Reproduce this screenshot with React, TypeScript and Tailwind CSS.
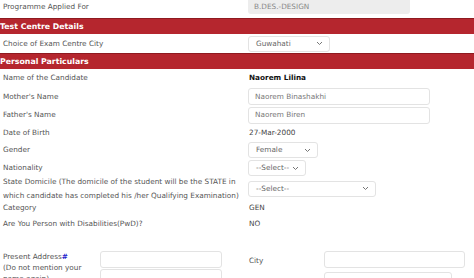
import React from "react";

const font = { fontFamily: '"DejaVu Sans", Verdana, sans-serif' };

function Chevron() {
  return (
    <svg width="7" height="5" viewBox="0 0 7 5" className="shrink-0">
      <path d="M1 1 L3.5 3.5 L6 1" stroke="#777" strokeWidth="1" fill="none" />
    </svg>
  );
}

function Select({ w, text }: { w: string; text: string }) {
  return (
    <div className={`${w} h-[16px] border border-[#e3e3e3] rounded-[3px] bg-white flex items-center justify-between pl-[7px] pr-[6px] text-[#666]`}>
      <span>{text}</span>
      <Chevron />
    </div>
  );
}

function Input({ w, text }: { w: string; text?: string }) {
  return (
    <div className={`${w} h-[17px] border border-[#e3e3e3] rounded-[3px] bg-white flex items-center pl-[6px] text-[#777]`}>
      {text}
    </div>
  );
}

function Bar({ title }: { title: string }) {
  return (
    <div className="h-[16px] bg-[#b5262e] border-t border-[#8f1a20] flex items-center text-white font-bold text-[7.8px]">
      <span>{title}</span>
    </div>
  );
}

function Row({ h, label, children }: { h: string; label: React.ReactNode; children?: React.ReactNode }) {
  return (
    <div className={`${h} flex items-center`}>
      <div className="w-[248px] pl-[3px] text-[#555]">{label}</div>
      <div className="flex-1 flex items-center">{children}</div>
    </div>
  );
}

export default function App() {
  return (
    <div className="w-[474px] h-[278px] overflow-hidden bg-white text-[7.3px] leading-[14px]" style={font}>
      <div className="h-[18px] flex items-start">
        <div className="w-[248px] h-[14px] pl-[3px] flex items-center text-[#555]">Programme Applied For</div>
        <div className="w-[162px] h-[14px] bg-[#ededed] rounded-b-[3px] flex items-center pl-[6px] text-[#888]">B.DES.-DESIGN</div>
      </div>
      <Bar title="Test Centre Details" />
      <Row h="h-[19px]" label="Choice of Exam Centre City">
        <Select w="w-[82px]" text="Guwahati" />
      </Row>
      <Bar title="Personal Particulars" />
      <Row h="h-[18px]" label="Name of the Candidate">
        <span className="pl-[1px] font-bold text-[#111]">Naorem Lilina</span>
      </Row>
      <Row h="h-[19px]" label="Mother's Name">
        <Input w="w-[182px]" text="Naorem Binashakhi" />
      </Row>
      <Row h="h-[18px]" label="Father's Name">
        <Input w="w-[182px]" text="Naorem Biren" />
      </Row>
      <Row h="h-[17px]" label="Date of Birth">
        <span className="pl-[1px] text-[#444]">27-Mar-2000</span>
      </Row>
      <Row h="h-[18px]" label="Gender">
        <Select w="w-[70px]" text="Female" />
      </Row>
      <Row h="h-[18px]" label="Nationality">
        <Select w="w-[58px]" text="--Select--" />
      </Row>
      <Row
        h="h-[23px]"
        label={
          <div className="leading-[14px]">
            State Domicile (The domicile of the student will be the STATE in
            <br />
            which candidate has completed his /her Qualifying Examination)
          </div>
        }
      >
        <Select w="w-[128px]" text="--Select--" />
      </Row>
      <Row h="h-[15px]" label="Category">
        <span className="pl-[1px] text-[#444]">GEN</span>
      </Row>
      <Row h="h-[18px]" label="Are You Person with Disabilities(PwD)?">
        <span className="pl-[1px] text-[#444]">NO</span>
      </Row>
      <div className="h-[18px]" />
      <div className="flex items-start">
        <div className="w-[100px] pl-[3px] text-[#555] leading-[11px] pt-[0px]">
          Present Address<span className="text-[#2222cc] font-bold">#</span>
          <br />
          (Do not mention your
          <br />
          name again)
        </div>
        <div className="w-[148px] flex flex-col gap-[1px]">
          <Input w="w-[122px]" />
          <Input w="w-[122px]" />
        </div>
        <div className="w-[76px] pl-[1px] h-[20px] flex items-center text-[#555]">City</div>
        <div className="flex flex-col gap-[4px]">
          <Input w="w-[141px]" />
          <Input w="w-[128px]" />
        </div>
      </div>
    </div>
  );
}
